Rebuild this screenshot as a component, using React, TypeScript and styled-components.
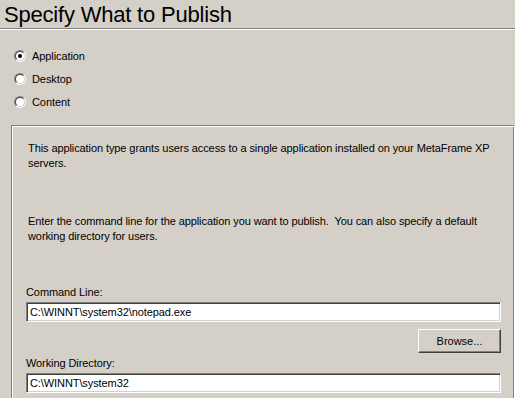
import React from "react";
import styled, { createGlobalStyle } from "styled-components";

const GlobalStyle = createGlobalStyle`
  html, body {
    margin: 0;
    padding: 0;
    background: #d4d0c8;
  }
  body {
    font-family: "Liberation Sans", Arial, sans-serif;
    font-size: 11px;
    letter-spacing: -0.09px;
    color: #000;
  }
`;

const Page = styled.div`
  width: 515px;
  height: 398px;
  overflow: hidden;
  background: #d4d0c8;
`;

const Header = styled.div`
  height: 29px;
  border-bottom: 1px solid #808080;
  box-shadow: 0 1px 0 #ffffff;
  padding-left: 4px;
  box-sizing: border-box;
`;

const Title = styled.h1`
  margin: 0;
  padding-top: 2px;
  font-weight: normal;
  font-size: 22px;
  line-height: 26px;
  letter-spacing: -0.2px;
`;

const RadioGroup = styled.div`
  display: flex;
  flex-direction: column;
  padding: 21px 0 0 14px;
  gap: 11px;
`;

const RadioRow = styled.label`
  display: flex;
  align-items: center;
  gap: 6px;
  height: 12px;
`;

const RadioOuter = styled.span`
  width: 12px;
  height: 12px;
  box-sizing: border-box;
  border-radius: 50%;
  border: 1px solid;
  border-color: #808080 #ffffff #ffffff #808080;
  display: flex;
`;

const RadioInner = styled.span<{ $checked: boolean }>`
  flex: 1;
  border-radius: 50%;
  border: 1px solid;
  border-color: #404040 #d4d0c8 #d4d0c8 #404040;
  background: #fff;
  display: flex;
  align-items: center;
  justify-content: center;
  &::after {
    content: "";
    width: 4px;
    height: 4px;
    border-radius: 50%;
    background: ${(p) => (p.$checked ? "#000" : "transparent")};
  }
`;

const Panel = styled.div`
  margin: 17px 0 0 11px;
  border: 1px solid;
  border-color: #808080 #ffffff #ffffff #808080;
  box-shadow: inset 1px 1px 0 #ffffff, inset -1px -1px 0 #808080;
  padding: 15px 13px 20px 14px;
  height: 300px;
`;

const Para = styled.p<{ $gap: number }>`
  margin: 0 0 ${(p) => p.$gap}px 2px;
  line-height: 15px;
`;

const FieldLabel = styled.div`
  line-height: 15px;
  margin-bottom: 2px;
`;

const TextField = styled.div`
  height: 20px;
  box-sizing: border-box;
  background: #fff;
  border: 1px solid;
  border-color: #808080 #ffffff #ffffff #808080;
  box-shadow: inset 1px 1px 0 #404040, inset -1px -1px 0 #d4d0c8;
  padding: 2px 3px;
  line-height: 15px;
  white-space: nowrap;
`;

const ButtonRow = styled.div`
  display: flex;
  justify-content: flex-end;
  margin: 7px 0 3px;
`;

const Button = styled.button`
  width: 83px;
  height: 24px;
  box-sizing: border-box;
  background: #d4d0c8;
  font-family: inherit;
  font-size: 11px;
  color: #000;
  border: 1px solid;
  border-color: #ffffff #404040 #404040 #ffffff;
  box-shadow: inset -1px -1px 0 #808080, inset 1px 1px 0 #d4d0c8;
  padding: 0;
`;

const options = [
  { label: "Application", checked: true },
  { label: "Desktop", checked: false },
  { label: "Content", checked: false },
];

export default function App() {
  return (
    <Page>
      <GlobalStyle />
      <Header>
        <Title>Specify What to Publish</Title>
      </Header>
      <RadioGroup>
        {options.map((o) => (
          <RadioRow key={o.label}>
            <RadioOuter>
              <RadioInner $checked={o.checked} />
            </RadioOuter>
            {o.label}
          </RadioRow>
        ))}
      </RadioGroup>
      <Panel>
        <Para $gap={43}>
          This application type grants users access to a single application installed on your MetaFrame XP
          servers.
        </Para>
        <Para $gap={41}>
          Enter the command line for the application you want to publish.&nbsp; You can also specify a default
          working directory for users.
        </Para>
        <FieldLabel>Command Line:</FieldLabel>
        <TextField>C:\WINNT\system32\notepad.exe</TextField>
        <ButtonRow>
          <Button>Browse...</Button>
        </ButtonRow>
        <FieldLabel>Working Directory:</FieldLabel>
        <TextField>C:\WINNT\system32</TextField>
      </Panel>
    </Page>
  );
}
